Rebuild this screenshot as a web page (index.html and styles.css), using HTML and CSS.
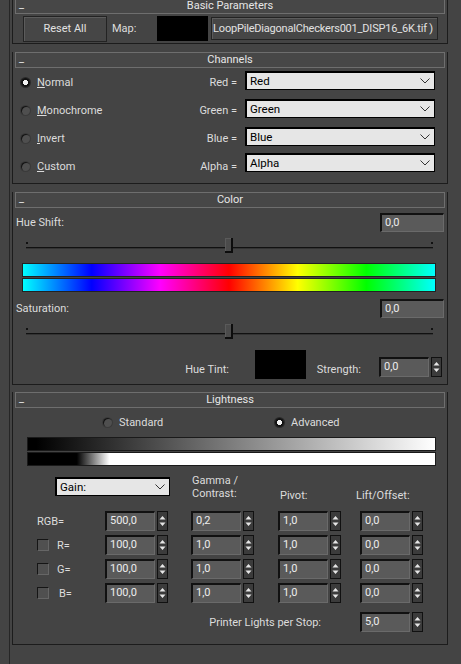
FILE: index.html
```html
<!DOCTYPE html>
<html lang="en">
<head>
    <meta charset="UTF-8">
    <meta name="viewport" content="width=device-width, initial-scale=1.0">
    <title>Color Correction</title>
    <link rel="stylesheet" href="styles.css">
</head>
<body>
<div class="panel">

    <!-- Basic Parameters -->
    <div class="rollout">
        <div class="title"><span class="dash">_</span><span>Basic Parameters</span><span></span></div>
        <div class="body basic">
            <div class="btn reset">Reset All</div>
            <span class="map-label">Map:</span>
            <span class="map-swatch"></span>
            <div class="btn map-btn"><span>LoopPileDiagonalCheckers001_DISP16_6K.tif )</span></div>
        </div>
    </div>

    <!-- Channels -->
    <div class="rollout">
        <div class="title"><span class="dash">_</span><span>Channels</span><span></span></div>
        <div class="body channels">
            <div class="ch-row">
                <span class="radio-opt"><span class="radio on"></span><span><u>N</u>ormal</span></span>
                <span class="ch-label">Red =</span>
                <div class="dropdown ch-drop"><span>Red</span><svg width="10" height="6" viewBox="0 0 10 6"><polyline points="0.5,0.5 5,5 9.5,0.5" fill="none" stroke="#333" stroke-width="1"/></svg></div>
            </div>
            <div class="ch-row">
                <span class="radio-opt"><span class="radio"></span><span><u>M</u>onochrome</span></span>
                <span class="ch-label">Green =</span>
                <div class="dropdown ch-drop"><span>Green</span><svg width="10" height="6" viewBox="0 0 10 6"><polyline points="0.5,0.5 5,5 9.5,0.5" fill="none" stroke="#333" stroke-width="1"/></svg></div>
            </div>
            <div class="ch-row">
                <span class="radio-opt"><span class="radio"></span><span><u>I</u>nvert</span></span>
                <span class="ch-label">Blue =</span>
                <div class="dropdown ch-drop"><span>Blue</span><svg width="10" height="6" viewBox="0 0 10 6"><polyline points="0.5,0.5 5,5 9.5,0.5" fill="none" stroke="#333" stroke-width="1"/></svg></div>
            </div>
            <div class="ch-row">
                <span class="radio-opt"><span class="radio"></span><span><u>C</u>ustom</span></span>
                <span class="ch-label">Alpha =</span>
                <div class="dropdown ch-drop last"><span>Alpha</span><svg width="10" height="6" viewBox="0 0 10 6"><polyline points="0.5,0.5 5,5 9.5,0.5" fill="none" stroke="#333" stroke-width="1"/></svg></div>
            </div>
        </div>
    </div>

    <!-- Color -->
    <div class="rollout color-roll">
        <div class="title"><span class="dash">_</span><span>Color</span><span></span></div>
        <div class="body color">
            <div class="val-row">
                <span>Hue Shift:</span>
                <span class="field wide">0,0</span>
            </div>
            <div class="slider"><div class="track"></div><span class="thumb"></span></div>
            <div class="hue-bars">
                <div class="hue"></div>
                <div class="hue"></div>
            </div>
            <div class="val-row sat-row">
                <span>Saturation:</span>
                <span class="field wide">0,0</span>
            </div>
            <div class="slider"><div class="track"></div><span class="thumb"></span></div>
            <div class="tint-row">
                <span class="tint-label">Hue Tint:</span>
                <span class="tint-swatch"></span>
                <span class="strength">Strength:</span>
                <div class="spinner tint-spin"><span class="field">0,0</span><span class="arrows"><svg width="9" height="18" viewBox="0 0 9 18"><path d="M1.5 7.5 L4.5 4 L7.5 7.5Z M1.5 10.5 L4.5 14 L7.5 10.5Z" fill="#e6e6e6"/></svg></span></div>
            </div>
        </div>
    </div>

    <!-- Lightness -->
    <div class="rollout">
        <div class="title"><span class="dash">_</span><span>Lightness</span><span></span></div>
        <div class="body lightness">
            <div class="mode-row">
                <span class="mode"><span class="radio"></span><span>Standard</span></span>
                <span class="mode"><span class="radio on"></span><span>Advanced</span></span>
            </div>
            <div class="gray-bars">
                <div class="gray g1"></div>
                <div class="gray g2"></div>
            </div>
            <div class="grid-head">
                <div class="dropdown gain"><span>Gain:</span><svg width="10" height="6" viewBox="0 0 10 6"><polyline points="0.5,0.5 5,5 9.5,0.5" fill="none" stroke="#333" stroke-width="1"/></svg></div>
                <span class="head-gamma">Gamma /<br>Contrast:</span>
                <span class="head-pivot">Pivot:</span>
                <span class="head-lift">Lift/Offset:</span>
            </div>
            <div class="grid">
                <span class="row-label">RGB=</span>
                <div class="spinner"><span class="field">500,0</span><span class="arrows"><svg width="9" height="18" viewBox="0 0 9 18"><path d="M1.5 7.5 L4.5 4 L7.5 7.5Z M1.5 10.5 L4.5 14 L7.5 10.5Z" fill="#e6e6e6"/></svg></span></div>
                <div class="spinner"><span class="field">0,2</span><span class="arrows"><svg width="9" height="18" viewBox="0 0 9 18"><path d="M1.5 7.5 L4.5 4 L7.5 7.5Z M1.5 10.5 L4.5 14 L7.5 10.5Z" fill="#e6e6e6"/></svg></span></div>
                <div class="spinner"><span class="field">1,0</span><span class="arrows"><svg width="9" height="18" viewBox="0 0 9 18"><path d="M1.5 7.5 L4.5 4 L7.5 7.5Z M1.5 10.5 L4.5 14 L7.5 10.5Z" fill="#e6e6e6"/></svg></span></div>
                <div class="spinner"><span class="field">0,0</span><span class="arrows"><svg width="9" height="18" viewBox="0 0 9 18"><path d="M1.5 7.5 L4.5 4 L7.5 7.5Z M1.5 10.5 L4.5 14 L7.5 10.5Z" fill="#e6e6e6"/></svg></span></div>

                <span class="row-label"><span class="check"></span><span>R=</span></span>
                <div class="spinner"><span class="field">100,0</span><span class="arrows"><svg width="9" height="18" viewBox="0 0 9 18"><path d="M1.5 7.5 L4.5 4 L7.5 7.5Z M1.5 10.5 L4.5 14 L7.5 10.5Z" fill="#e6e6e6"/></svg></span></div>
                <div class="spinner"><span class="field">1,0</span><span class="arrows"><svg width="9" height="18" viewBox="0 0 9 18"><path d="M1.5 7.5 L4.5 4 L7.5 7.5Z M1.5 10.5 L4.5 14 L7.5 10.5Z" fill="#e6e6e6"/></svg></span></div>
                <div class="spinner"><span class="field">1,0</span><span class="arrows"><svg width="9" height="18" viewBox="0 0 9 18"><path d="M1.5 7.5 L4.5 4 L7.5 7.5Z M1.5 10.5 L4.5 14 L7.5 10.5Z" fill="#e6e6e6"/></svg></span></div>
                <div class="spinner"><span class="field">0,0</span><span class="arrows"><svg width="9" height="18" viewBox="0 0 9 18"><path d="M1.5 7.5 L4.5 4 L7.5 7.5Z M1.5 10.5 L4.5 14 L7.5 10.5Z" fill="#e6e6e6"/></svg></span></div>

                <span class="row-label"><span class="check"></span><span>G=</span></span>
                <div class="spinner"><span class="field">100,0</span><span class="arrows"><svg width="9" height="18" viewBox="0 0 9 18"><path d="M1.5 7.5 L4.5 4 L7.5 7.5Z M1.5 10.5 L4.5 14 L7.5 10.5Z" fill="#e6e6e6"/></svg></span></div>
                <div class="spinner"><span class="field">1,0</span><span class="arrows"><svg width="9" height="18" viewBox="0 0 9 18"><path d="M1.5 7.5 L4.5 4 L7.5 7.5Z M1.5 10.5 L4.5 14 L7.5 10.5Z" fill="#e6e6e6"/></svg></span></div>
                <div class="spinner"><span class="field">1,0</span><span class="arrows"><svg width="9" height="18" viewBox="0 0 9 18"><path d="M1.5 7.5 L4.5 4 L7.5 7.5Z M1.5 10.5 L4.5 14 L7.5 10.5Z" fill="#e6e6e6"/></svg></span></div>
                <div class="spinner"><span class="field">0,0</span><span class="arrows"><svg width="9" height="18" viewBox="0 0 9 18"><path d="M1.5 7.5 L4.5 4 L7.5 7.5Z M1.5 10.5 L4.5 14 L7.5 10.5Z" fill="#e6e6e6"/></svg></span></div>

                <span class="row-label"><span class="check"></span><span class="b-label">B=</span></span>
                <div class="spinner"><span class="field">100,0</span><span class="arrows"><svg width="9" height="18" viewBox="0 0 9 18"><path d="M1.5 7.5 L4.5 4 L7.5 7.5Z M1.5 10.5 L4.5 14 L7.5 10.5Z" fill="#e6e6e6"/></svg></span></div>
                <div class="spinner"><span class="field">1,0</span><span class="arrows"><svg width="9" height="18" viewBox="0 0 9 18"><path d="M1.5 7.5 L4.5 4 L7.5 7.5Z M1.5 10.5 L4.5 14 L7.5 10.5Z" fill="#e6e6e6"/></svg></span></div>
                <div class="spinner"><span class="field">1,0</span><span class="arrows"><svg width="9" height="18" viewBox="0 0 9 18"><path d="M1.5 7.5 L4.5 4 L7.5 7.5Z M1.5 10.5 L4.5 14 L7.5 10.5Z" fill="#e6e6e6"/></svg></span></div>
                <div class="spinner"><span class="field">0,0</span><span class="arrows"><svg width="9" height="18" viewBox="0 0 9 18"><path d="M1.5 7.5 L4.5 4 L7.5 7.5Z M1.5 10.5 L4.5 14 L7.5 10.5Z" fill="#e6e6e6"/></svg></span></div>
            </div>
            <div class="printer">
                <span class="printer-label">Printer Lights per Stop:</span>
                <div class="spinner"><span class="field">5,0</span><span class="arrows"><svg width="9" height="18" viewBox="0 0 9 18"><path d="M1.5 7.5 L4.5 4 L7.5 7.5Z M1.5 10.5 L4.5 14 L7.5 10.5Z" fill="#e6e6e6"/></svg></span></div>
            </div>
        </div>
    </div>

</div>
</body>
</html>
```

FILE: styles.css
```css
*, *:before, *:after {
  box-sizing: border-box;
}

body {
  margin: 0;
  height: 664px;
  overflow: hidden;
  background: #444444;
  font-family: Roboto, "Open Sans", sans-serif;
  font-size: 11px;
  color: #dcdcdc;
}

.panel {
  margin-top: -2px;
  margin-left: 9px;
  padding-left: 2px;
  height: 680px;
  border-left: 1px solid #262626;
}

/* rollouts */
.rollout {
  width: 436px;
  margin-bottom: 8px;
  border: 1px solid #1c1c1c;
  border-top: 0;
}

.color-roll {
  margin-bottom: 7px;
}

.title {
  display: grid;
  grid-template-columns: 1fr auto 1fr;
  height: 16px;
  margin: 0 2px;
  border: 1px solid #6e6e6e;
  background: #474747;
  line-height: 14px;
  color: #e6e6e6;
}

.dash {
  padding-left: 3px;
  line-height: 12px;
}

/* basic parameters */
.basic {
  display: flex;
  align-items: center;
  height: 29px;
  padding-left: 10px;
}

.btn {
  background: #464646;
  border: 1px solid #232323;
  box-shadow: inset 1px 1px 0 #5c5c5c;
  color: #e2e2e2;
}

.reset {
  width: 84px;
  height: 26px;
  line-height: 24px;
  text-align: center;
}

.map-label {
  width: 45px;
  margin-left: 5px;
}

.map-swatch {
  width: 51px;
  height: 25px;
  background: #000;
}

.map-btn {
  display: flex;
  justify-content: flex-end;
  align-items: center;
  width: 227px;
  height: 23px;
  margin-left: 3px;
  padding-right: 4px;
  overflow: hidden;
  white-space: nowrap;
  letter-spacing: -0.2px;
}

/* channels */
.channels {
  padding-bottom: 3px;
}

.ch-row {
  display: flex;
  align-items: center;
  height: 28px;
}

.radio-opt {
  display: flex;
  align-items: center;
  gap: 7px;
  width: 157px;
  padding-left: 8px;
}

.radio {
  width: 9px;
  height: 9px;
  border-radius: 50%;
  background: #4f4f4f;
  box-shadow: inset 1px 1px 0 #151515, 0 0 0 1px #3a3a3a;
}

.radio.on {
  background: radial-gradient(circle, #f2f2f2 0 2.3px, #111 2.8px);
  box-shadow: 0 0 0 1px #2a2a2a;
}

.ch-label {
  width: 71px;
  padding-right: 4px;
  text-align: right;
}

.dropdown {
  display: flex;
  justify-content: space-between;
  align-items: center;
  height: 19px;
  padding: 0 4px 0 3px;
  background: #e6e6e6;
  border-style: solid;
  border-color: #000;
  border-width: 2px 1px 1px 2px;
  color: #000;
  font-size: 11.5px;
}

.ch-drop {
  width: 190px;
  margin-left: 4px;
  margin-bottom: 4px;
}

.ch-drop.last {
  margin-bottom: 8px;
}

/* color */
.val-row {
  display: flex;
  justify-content: space-between;
  align-items: center;
  height: 24px;
  padding: 5px 3px 0 3px;
}

.sat-row {
  height: 26px;
  padding-top: 7px;
}

.field {
  display: block;
  width: 50px;
  height: 20px;
  padding-left: 3px;
  background: #5a5a5a;
  border-style: solid;
  border-width: 2px 1px 1px 2px;
  border-color: #111 #6a6a6a #6a6a6a #111;
  line-height: 16px;
  color: #ececec;
}

.field.wide {
  width: 64px;
  height: 19px;
}

.slider {
  position: relative;
  height: 20px;
  margin: 5px 14px 0 13px;
  padding-top: 10px;
}

.slider .track {
  height: 2px;
  background: #111;
  border-bottom: 1px solid #333;
}

.slider:before,
.slider:after {
  content: "";
  position: absolute;
  top: 5px;
  width: 2px;
  height: 2px;
  background: #111;
}

.slider:before {
  left: 0;
}

.slider:after {
  right: 0;
}

.thumb {
  position: absolute;
  left: 199px;
  top: 1px;
  width: 8px;
  height: 15px;
  background: #4b4b4b;
  border-right: 2px solid #0d0d0d;
  border-bottom: 2px solid #0d0d0d;
  box-shadow: inset 1px 1px 0 #5a5a5a;
}

.hue-bars {
  margin: 6px 11px 0 9px;
}

.hue {
  height: 14px;
  border: 1px solid #222;
  background: linear-gradient(to right, #00ffff, #0000ff 16.67%, #ff00ff 33.33%, #ff0000 50%, #ffff00 66.67%, #00ff00 83.33%, #00ffff);
}

.hue + .hue {
  margin-top: 1px;
}

.tint-row {
  display: flex;
  align-items: flex-end;
  height: 29px;
  margin-top: 7px;
}

.tint-label {
  width: 216px;
  margin-bottom: 3px;
  text-align: right;
}

.tint-swatch {
  width: 51px;
  height: 29px;
  margin-left: 26px;
  background: #000;
}

.strength {
  width: 55px;
  margin-bottom: 3px;
  text-align: right;
}

.tint-spin {
  margin-left: 18px;
  margin-bottom: 2px;
}

.color {
  padding-bottom: 5px;
}

/* spinners */
.spinner {
  display: flex;
  gap: 2px;
}

.arrows {
  display: flex;
  justify-content: center;
  width: 11px;
  height: 20px;
  background: #3b3b3b;
  border: 1px solid #111;
}

/* lightness */
.mode-row {
  display: flex;
  align-items: center;
  height: 29px;
  padding-left: 90px;
}

.mode {
  display: flex;
  align-items: center;
  gap: 7px;
  width: 180px;
}

.gray-bars {
  margin: 0 11px 0 14px;
}

.gray {
  height: 14px;
  border: 1px solid #1a1a1a;
}

.g1 {
  background: linear-gradient(to right, #000 2%, #fff 100%);
}

.g2 {
  margin-top: 1px;
  background: linear-gradient(to right, #000 12%, #fff 20%);
}

.grid-head,
.grid {
  display: grid;
  grid-template-columns: 92px 86px 87px 82px 87px;
  align-items: start;
}

.grid-head {
  height: 45px;
}

.gain {
  grid-column: 1 / span 2;
  width: 115px;
  margin: 11px 0 0 42px;
}

.head-gamma {
  margin-top: 8px;
  padding-left: 1px;
  line-height: 13px;
}

.head-pivot {
  margin-top: 23px;
  padding-left: 2px;
}

.head-lift {
  margin-top: 23px;
  margin-left: -4px;
}

.grid {
  grid-auto-rows: 24px;
}

.row-label {
  display: flex;
  align-items: center;
  gap: 8px;
  height: 20px;
  padding-left: 24px;
}

.check {
  width: 12px;
  height: 12px;
  background: #505050;
  border-style: solid;
  border-width: 1px;
  border-color: #151515 #666 #666 #151515;
}

.b-label {
  padding-left: 2px;
}

.printer {
  display: grid;
  grid-template-columns: 347px 87px;
  align-items: center;
  margin-top: 5px;
  padding-bottom: 12px;
}

.printer-label {
  padding-right: 39px;
  text-align: right;
}
```
